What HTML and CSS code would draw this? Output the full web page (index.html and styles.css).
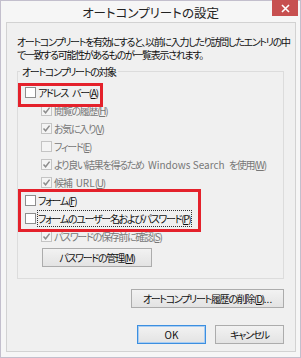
FILE: index.html
```html
<!DOCTYPE html>
<html lang="ja">
<head>
<meta charset="utf-8">
<title>オートコンプリートの設定</title>
<link rel="stylesheet" href="styles.css">
</head>
<body>
<div class="window">
<div class="titlebar">
<span></span>
<span class="title">オートコンプリートの設定</span>
<button class="close"><svg width="9" height="9" viewBox="0 0 9 9"><path d="M1 1L8 8M8 1L1 8" stroke="#fff" stroke-width="1.6"/></svg></button>
</div>
<div class="content">
<p class="desc">オートコンプリートを有効にすると、以前に入力したり訪問したエントリの中<br>で一致する可能性があるものが一覧表示されます。</p>
<fieldset class="group">
<legend>オートコンプリートの対象</legend>
<div class="row"><span class="box"></span><span>アドレス<span class="sp"> </span>バー(<u>A</u>)</span></div>
<div class="row sub disabled"><span class="box checked"><svg width="9" height="9" viewBox="0 0 9 9"><path d="M1.5 4.5L3.6 6.8L7.6 1.6" fill="none" stroke="#8c8c8c" stroke-width="1.5"/></svg></span><span>閲覧の履歴(<u>H</u>)</span></div>
<div class="row sub disabled"><span class="box checked"><svg width="9" height="9" viewBox="0 0 9 9"><path d="M1.5 4.5L3.6 6.8L7.6 1.6" fill="none" stroke="#8c8c8c" stroke-width="1.5"/></svg></span><span>お気に入り(<u>V</u>)</span></div>
<div class="row sub disabled"><span class="box"></span><span>フィード(<u>E</u>)</span></div>
<div class="row sub disabled"><span class="box checked"><svg width="9" height="9" viewBox="0 0 9 9"><path d="M1.5 4.5L3.6 6.8L7.6 1.6" fill="none" stroke="#8c8c8c" stroke-width="1.5"/></svg></span><span>より良い結果を得るため<span class="sp"> </span><span class="latin">Windows Search</span><span class="sp"> </span>を使用(<u>W</u>)</span></div>
<div class="row sub disabled"><span class="box checked"><svg width="9" height="9" viewBox="0 0 9 9"><path d="M1.5 4.5L3.6 6.8L7.6 1.6" fill="none" stroke="#8c8c8c" stroke-width="1.5"/></svg></span><span>候補<span class="sp"> </span><span class="latin">URL</span>(<u>U</u>)</span></div>
<div class="row"><span class="box"></span><span>フォーム(<u>F</u>)</span></div>
<div class="row"><span class="box"></span><span class="focus">フォームのユーザー名およびパスワード(<u>P</u>)</span></div>
<div class="row sub disabled"><span class="box checked"><svg width="9" height="9" viewBox="0 0 9 9"><path d="M1.5 4.5L3.6 6.8L7.6 1.6" fill="none" stroke="#8c8c8c" stroke-width="1.5"/></svg></span><span>パスワードの保存前に確認(<u>S</u>)</span></div>
<div class="sub-action"><button class="btn manage">パスワードの管理(<u>M</u>)</button></div>
</fieldset>
<div class="history"><button class="btn wide">オートコンプリート履歴の削除(<u>D</u>)<span class="latin">...</span></button></div>
<div class="actions">
<button class="btn default"><span class="latin">OK</span></button>
<button class="btn">キャンセル</button>
</div>
</div>
<div class="mark mark-address"></div>
<div class="mark mark-form"></div>
</div>
</body>
</html>
```

FILE: styles.css
```css
body {
	margin: 0;
	font-family: "Noto Sans CJK JP", sans-serif;
	font-feature-settings: "palt";
	font-size: 10px;
	letter-spacing: -1.3px;
	color: #111;
}

.latin {
	letter-spacing: 0;
}

.sp {
	letter-spacing: 0;
	padding-right: 2px;
}

.window {
	background-color: #f6f6f6;
	border: 1px solid #c3bfcd;
	box-sizing: border-box;
	display: flex;
	flex-direction: column;
	height: 358px;
	position: relative;
	width: 301px;
}

.titlebar {
	align-items: start;
	display: grid;
	grid-template-columns: 1fr auto 1fr;
	height: 21px;
}

.titlebar .title {
	color: #222;
	font-size: 12.5px;
	letter-spacing: 0;
	line-height: 24px;
}

.titlebar .close {
	align-items: center;
	background-color: #c75050;
	border: none;
	display: flex;
	height: 16px;
	justify-content: center;
	justify-self: end;
	margin-right: 2px;
	margin-top: -1px;
	padding: 0;
	width: 26px;
}

.content {
	background-color: #f0f0f0;
	border: 1px solid #d2d2d2;
	flex: 1;
	margin: 0 4px 5px 5px;
	padding: 12px 11px 0 10px;
}

.desc {
	line-height: 13px;
	margin: 0;
	white-space: nowrap;
}

.group {
	border: 1px solid #dcdcdc;
	margin: 4px 0 0 0;
	padding: 5px 7px 11px 7px;
}

.group legend {
	line-height: 13px;
	margin-left: -5px;
	padding: 0 2px;
}

.row {
	align-items: center;
	display: flex;
	gap: 2px;
	height: 18px;
	white-space: nowrap;
}

.row.sub {
	margin-left: 16px;
}

.row.disabled {
	color: #777;
}

.box {
	align-items: center;
	background-color: #fff;
	border: 1px solid #8e8e8e;
	box-sizing: border-box;
	display: flex;
	flex: none;
	height: 11px;
	justify-content: center;
	width: 11px;
}

.disabled .box {
	background-color: #f4f4f4;
	border-color: #c4c4c4;
}

.focus {
	outline: 1px dotted #333;
	outline-offset: 0;
	padding-right: 1px;
}

.sub-action {
	margin: 3px 0 0 17px;
}

.btn {
	background: linear-gradient(#f2f2f2, #e3e3e3);
	border: 1px solid #acacac;
	color: #111;
	font-family: inherit;
	font-feature-settings: "palt";
	font-size: 10px;
	height: 19px;
	letter-spacing: -1.3px;
	line-height: 15px;
	padding: 0;
	white-space: nowrap;
}

.btn.manage {
	width: 110px;
}

.history {
	display: flex;
	justify-content: flex-end;
	margin-top: 10px;
}

.btn.wide {
	width: 153px;
}

.actions {
	display: flex;
	gap: 9px;
	justify-content: flex-end;
	margin-top: 17px;
}

.actions .btn {
	width: 69px;
}

.btn.default {
	border-color: #3c8fe0;
	box-shadow: inset 0 0 0 1px #a9cdf2;
}

.mark {
	border: 3px solid #e4212b;
	box-sizing: border-box;
	position: absolute;
}

.mark-address {
	height: 24px;
	left: 17px;
	top: 82px;
	width: 85px;
}

.mark-form {
	height: 43px;
	left: 17px;
	top: 188px;
	width: 183px;
}
```
